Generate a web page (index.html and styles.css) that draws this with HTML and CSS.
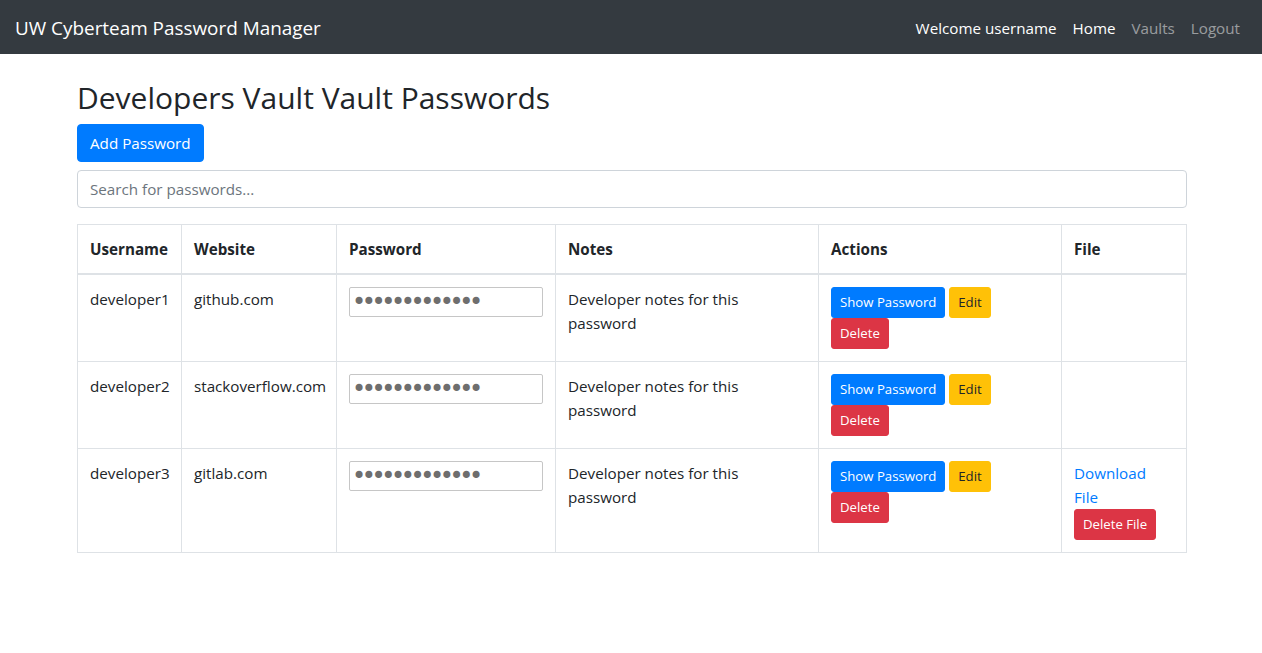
FILE: index.html
```html
<!DOCTYPE html>
<html lang="en">
<head>
<meta charset="utf-8">
<title>Developers Vault Passwords</title>
<link rel="stylesheet" href="styles.css">
</head>
<body>
<nav class="navbar">
  <a class="brand" href="#">UW Cyberteam Password Manager</a>
  <ul class="nav">
    <li class="nav-text">Welcome username</li>
    <li><a class="nav-link active" href="#">Home</a></li>
    <li><a class="nav-link" href="#">Vaults</a></li>
    <li><a class="nav-link" href="#">Logout</a></li>
  </ul>
</nav>
<main class="container">
  <h2 class="title">Developers Vault Vault Passwords</h2>
  <button class="btn btn-primary">Add Password</button>
  <input class="search" type="text" placeholder="Search for passwords...">
  <table class="table">
    <colgroup>
      <col class="c-user"><col class="c-site"><col class="c-pass"><col class="c-notes"><col class="c-actions"><col class="c-file">
    </colgroup>
    <thead>
      <tr><th>Username</th><th>Website</th><th>Password</th><th>Notes</th><th>Actions</th><th>File</th></tr>
    </thead>
    <tbody>
      <tr>
        <td>developer1</td>
        <td>github.com</td>
        <td><input class="pw" type="password" value="password12345" readonly></td>
        <td>Developer notes for this password</td>
        <td><button class="btn btn-sm btn-primary">Show Password</button> <button class="btn btn-sm btn-warning">Edit</button> <button class="btn btn-sm btn-danger">Delete</button></td>
        <td></td>
      </tr>
      <tr>
        <td>developer2</td>
        <td>stackoverflow.com</td>
        <td><input class="pw" type="password" value="password12345" readonly></td>
        <td>Developer notes for this password</td>
        <td><button class="btn btn-sm btn-primary">Show Password</button> <button class="btn btn-sm btn-warning">Edit</button> <button class="btn btn-sm btn-danger">Delete</button></td>
        <td></td>
      </tr>
      <tr>
        <td>developer3</td>
        <td>gitlab.com</td>
        <td><input class="pw" type="password" value="password12345" readonly></td>
        <td>Developer notes for this password</td>
        <td><button class="btn btn-sm btn-primary">Show Password</button> <button class="btn btn-sm btn-warning">Edit</button> <button class="btn btn-sm btn-danger">Delete</button></td>
        <td><a class="link" href="#">Download File</a><button class="btn btn-sm btn-danger">Delete File</button></td>
      </tr>
    </tbody>
  </table>
</main>
</body>
</html>
```
FILE: styles.css
```css
* { box-sizing: border-box; }
html, body { margin: 0; }
body {
  font-family: "Open Sans", "Noto Sans", sans-serif;
  font-size: 15.2px;
  line-height: 24px;
  color: #212529;
  background: #fff;
}
.navbar {
  background: #343a40;
  height: 54px;
  padding: 1px 14px 0 15px;
  display: flex;
  align-items: center;
  justify-content: space-between;
}
.brand {
  color: #fff;
  font-size: 18.9px;
  line-height: 30px;
  text-decoration: none;
}
.nav {
  list-style: none;
  margin: 0;
  padding: 0;
  display: flex;
  align-items: center;
}
.nav-text { color: #fff; padding: 0 8px; }
.nav-link {
  display: block;
  padding: 8px;
  color: rgba(255,255,255,.5);
  text-decoration: none;
}
.nav-link.active { color: #fff; }
.container {
  width: 1140px;
  margin: 0 auto;
  padding: 24px 14px 0 16px;
}
.title {
  font-size: 30px;
  font-weight: 400;
  line-height: 36px;
  margin: 0 0 8px;
  padding-top: 2px;
}
.btn {
  display: inline-block;
  font-family: inherit;
  font-size: 15.2px;
  line-height: 24px;
  padding: 6px 12px;
  border: 1px solid transparent;
  border-radius: 4px;
  cursor: pointer;
  vertical-align: middle;
}
.btn-sm { font-size: 13.2px; line-height: 21px; padding: 4px 8px; border-radius: 3px; }
.btn-primary { background: #007bff; border-color: #007bff; color: #fff; }
.btn-warning { background: #ffc107; border-color: #ffc107; color: #212529; }
.btn-danger { background: #dc3545; border-color: #dc3545; color: #fff; }
.search {
  display: block;
  width: 100%;
  height: 38px;
  margin: 8px 0 16px;
  padding: 6px 12px;
  font-family: inherit;
  font-size: 15.2px;
  color: #495057;
  border: 1px solid #ced4da;
  border-radius: 4px;
}
.search::placeholder { color: #6c757d; }
.table {
  width: 100%;
  table-layout: fixed;
  border-collapse: collapse;
}
.c-user { width: 104px; }
.c-site { width: 155px; }
.c-pass { width: 219px; }
.c-notes { width: 263px; }
.c-actions { width: 243px; }
.c-file { width: 125px; }
.table th, .table td {
  border: 1px solid #dee2e6;
  padding: 12px;
  text-align: left;
  vertical-align: top;
}
.table th { font-weight: 700; border-bottom-width: 2px; }
.pw {
  display: block;
  width: 100%;
  height: 30px;
  padding: 0 0 0 2px;
  font-family: "DejaVu Sans", sans-serif;
  font-size: 24px;
  line-height: 26px;
  letter-spacing: -4.4px;
  color: #6e6e6e;
  border: 1px solid #c6c6c6;
  border-radius: 2px;
}
.link { display: block; max-width: 80px; color: #007bff; text-decoration: none; }
```
